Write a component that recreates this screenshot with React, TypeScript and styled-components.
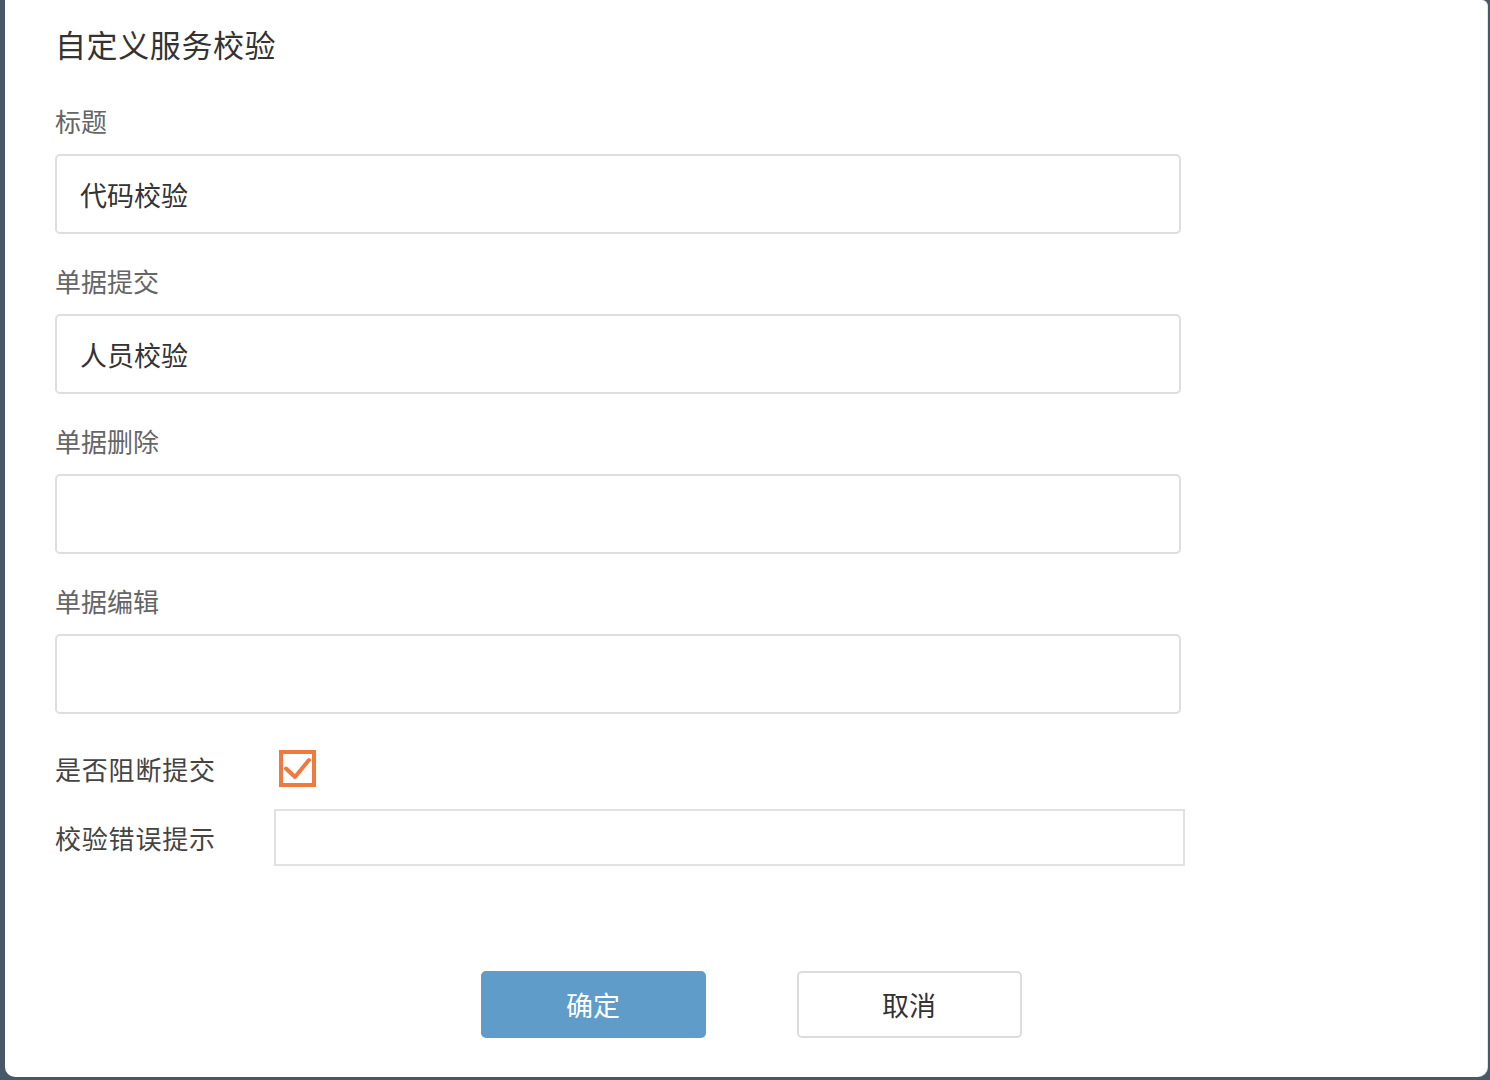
import styled, { createGlobalStyle } from "styled-components";

const GlobalStyle = createGlobalStyle`
  html, body {
    margin: 0;
    padding: 0;
    background: #475869;
  }
  body {
    font-family: "Noto Sans CJK SC", "Noto Sans", sans-serif;
  }
`;

const Page = styled.div`
  width: 1490px;
  height: 1080px;
  padding: 0 2px 3px 5px;
  box-sizing: border-box;
`;

const Panel = styled.div`
  height: 100%;
  background: #fff;
  border-radius: 0 6px 10px 10px;
  border-right: 1px solid #e4e4e4;
  box-sizing: border-box;
  display: flex;
  flex-direction: column;
`;

const Form = styled.div`
  padding: 0 0 0 50px;
  display: flex;
  flex-direction: column;
`;

const Title = styled.h2`
  margin: 24px 0 41px;
  font-size: 31px;
  letter-spacing: 0.6px;
  line-height: 40px;
  font-weight: 400;
  color: #333;
`;

const Field = styled.div`
  display: flex;
  flex-direction: column;
  gap: 17px;
  margin-bottom: 31px;
`;

const Label = styled.label`
  font-size: 26px;
  line-height: 32px;
  color: #666;
`;

const TextBox = styled.div`
  width: 1126px;
  height: 80px;
  box-sizing: border-box;
  border: 2px solid #dedede;
  border-radius: 5px;
  padding: 0 23px;
  display: flex;
  align-items: center;
  font-size: 27px;
  color: #333;
`;

const InlineRow = styled.div<{ $top: number }>`
  display: grid;
  grid-template-columns: 219px 1fr;
  align-items: center;
  margin-top: ${(p) => p.$top}px;
`;

const InlineLabel = styled.span`
  font-size: 26px;
  letter-spacing: 0.8px;
  line-height: 36px;
  color: #444;
`;

const CheckBox = styled.div`
  width: 37px;
  height: 37px;
  margin-left: 5px;
  box-sizing: border-box;
  border: 4px solid #ef7a3e;
  background: #fff;
  display: flex;
  align-items: center;
  justify-content: center;
`;

const PlainInput = styled.div`
  width: 911px;
  height: 57px;
  box-sizing: border-box;
  border: 2px solid #e2e2e2;
`;

const ButtonBar = styled.div`
  display: flex;
  justify-content: center;
  gap: 91px;
  padding-left: 10px;
  margin-top: 105px;
`;

const Button = styled.div<{ $primary?: boolean }>`
  width: 225px;
  height: 67px;
  box-sizing: border-box;
  border-radius: 5px;
  display: flex;
  align-items: center;
  justify-content: center;
  font-size: 27px;
  background: ${(p) => (p.$primary ? "#5f9cc9" : "#fff")};
  color: ${(p) => (p.$primary ? "#fff" : "#333")};
  border: 2px solid ${(p) => (p.$primary ? "#5f9cc9" : "#dcdcdc")};
`;

const fields = [
  { label: "标题", value: "代码校验" },
  { label: "单据提交", value: "人员校验" },
  { label: "单据删除", value: "" },
  { label: "单据编辑", value: "" },
];

export default function App() {
  return (
    <Page>
      <GlobalStyle />
      <Panel>
        <Form>
          <Title>自定义服务校验</Title>
          {fields.map((f) => (
            <Field key={f.label}>
              <Label>{f.label}</Label>
              <TextBox>{f.value}</TextBox>
            </Field>
          ))}
          <InlineRow $top={5}>
            <InlineLabel>是否阻断提交</InlineLabel>
            <CheckBox>
              <svg width="29" height="29" viewBox="0 0 29 29">
                <path
                  d="M3 14.5 L12 23 L26 6"
                  fill="none"
                  stroke="#ef7a3e"
                  strokeWidth="4"
                  strokeLinecap="round"
                  strokeLinejoin="round"
                />
              </svg>
            </CheckBox>
          </InlineRow>
          <InlineRow $top={22}>
            <InlineLabel>校验错误提示</InlineLabel>
            <PlainInput />
          </InlineRow>
        </Form>
        <ButtonBar>
          <Button $primary>确定</Button>
          <Button>取消</Button>
        </ButtonBar>
      </Panel>
    </Page>
  );
}
